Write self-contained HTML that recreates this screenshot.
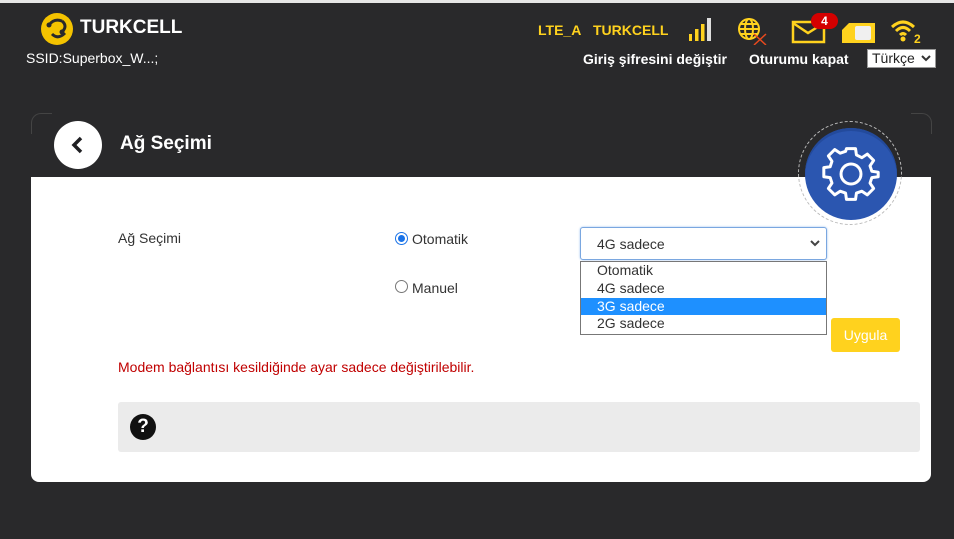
<!DOCTYPE html>
<html><head><meta charset="utf-8"><style>
body{margin:0;width:954px;height:539px;background:#29292b;font-family:"Liberation Sans",sans-serif;position:relative;overflow:hidden}
.a{position:absolute}
.y{color:#ffd21e;font-weight:bold;font-size:14px}
.w{color:#fff;font-weight:bold;font-size:14px}
.opt{position:absolute;left:16px;font-size:14px;color:#333}
</style></head><body>
<div class="a" style="left:0;top:0;width:954px;height:3px;background:#e6e6e6"></div>
<svg class="a" style="left:40px;top:12px" width="34" height="34" viewBox="0 0 34 34"><circle cx="17" cy="17" r="16" fill="#f4c300"/><path d="M9 13 Q14 6 22 9 M12 22 Q18 28 25 21 M22 9 Q28 14 22 20" stroke="#29292b" stroke-width="3" fill="none"/><circle cx="9" cy="13" r="2.5" fill="#29292b"/><circle cx="22" cy="20" r="2.5" fill="#29292b"/></svg>
<div class="a" style="left:80px;top:17px;color:#fff;font-weight:bold;font-size:19px">TURKCELL</div>
<div class="a" style="left:26px;top:50px;color:#fff;font-size:14px">SSID:Superbox_W...;</div>
<div class="a y" style="left:538px;top:22px">LTE_A</div>
<div class="a y" style="left:593px;top:22px">TURKCELL</div>
<svg class="a" style="left:688px;top:17px" width="26" height="26"><rect x="1" y="17" width="3" height="7" fill="#ffd21e"/><rect x="7" y="12" width="3.5" height="12" fill="#ffd21e"/><rect x="13" y="7" width="3.5" height="17" fill="#ffd21e"/><rect x="19" y="1" width="4" height="23" fill="#ddd"/></svg>
<svg class="a" style="left:737px;top:17px" width="32" height="28"><circle cx="12" cy="12" r="10" fill="none" stroke="#ffd21e" stroke-width="2"/><ellipse cx="12" cy="12" rx="4" ry="10" fill="none" stroke="#ffd21e" stroke-width="2"/><path d="M2 12H22M4 7H20M4 17H20" stroke="#ffd21e" stroke-width="2"/><path d="M17 17L29 28M29 17L17 28" stroke="#e84a1e" stroke-width="1.5"/></svg>
<svg class="a" style="left:791px;top:20px" width="36" height="24"><rect x="2" y="2" width="31" height="20" fill="none" stroke="#ffd21e" stroke-width="2.5"/><path d="M2 3L17 13L33 3" fill="none" stroke="#ffd21e" stroke-width="2.5"/></svg>
<div class="a" style="left:811px;top:13px;width:27px;height:16px;background:#d40000;border-radius:8px;color:#fff;font-weight:bold;font-size:12px;text-align:center;line-height:16px">4</div>
<svg class="a" style="left:841px;top:22px" width="36" height="22"><path d="M8 1H34V21H1V8Z" fill="#ffd21e"/><rect x="14" y="4" width="16" height="14" rx="2" fill="#f0f0f0"/></svg>
<svg class="a" style="left:890px;top:18px" width="34" height="26"><path d="M2 9Q13 -1 24 9M6 13Q13 6 20 13M10 17Q13 14 16 17" fill="none" stroke="#ffd21e" stroke-width="3"/><circle cx="13" cy="21" r="2.5" fill="#ffd21e"/><text x="24" y="25" fill="#ffd21e" font-size="12" font-weight="bold" font-family="Liberation Sans">2</text></svg>
<div class="a w" style="left:583px;top:51px">Giriş şifresini değiştir</div>
<div class="a w" style="left:749px;top:51px">Oturumu kapat</div>
<div class="a" style="left:867px;top:49px;width:69px;height:19px;background:#fff;border:1px solid #999;box-sizing:border-box;font-size:14px;color:#222;line-height:17px;padding-left:4px">Türkçe<svg style="position:absolute;right:4px;top:5px" width="10" height="8"><path d="M1 1L5 5L9 1" fill="none" stroke="#333" stroke-width="2"/></svg></div>
<div class="a" style="left:31px;top:113px;width:20px;height:20px;border-radius:10px 0 0 0;border-top:1px solid #444;border-left:1px solid #444"></div>
<div class="a" style="left:911px;top:113px;width:20px;height:20px;border-radius:0 10px 0 0;border-top:1px solid #444;border-right:1px solid #444"></div>
<div class="a" style="left:31px;top:177px;width:900px;height:305px;background:#fff;border-radius:0 0 8px 8px"></div>
<div class="a" style="left:54px;top:121px;width:48px;height:48px;border-radius:50%;background:#fff"></div>
<svg class="a" style="left:70px;top:135px" width="16" height="20"><path d="M11 3L4 10L11 17" fill="none" stroke="#1f1f22" stroke-width="3.5"/></svg>
<div class="a" style="left:120px;top:133px;color:#fff;font-weight:bold;font-size:19px">Ağ Seçimi</div>
<div class="a" style="left:798px;top:121px;width:104px;height:104px;border-radius:50%;border:1.5px dashed #bbb;box-sizing:border-box"></div>
<div class="a" style="left:805px;top:128px;width:92px;height:92px;border-radius:50%;background:#2b56b0;box-shadow:inset 0 3px 0 #234a9c"></div>
<svg class="a" style="left:822px;top:145px" width="58" height="58" viewBox="0 0 64 64"><g fill="none" stroke="#fff" stroke-width="3.3" stroke-linejoin="round"><path d="M27 6H37L38 13L44 16L50 12L57 19L53 25L55 31L62 32V37L55 38L53 44L57 50L50 57L44 53L38 55L37 62H27L26 55L20 53L14 57L7 50L11 44L9 38L2 37V27L9 26L11 20L7 14L14 7L20 11L26 9Z" transform="translate(0,-2)"/><circle cx="32" cy="32" r="11"/></g></svg>
<div class="a" style="left:118px;top:230px;font-size:14px;color:#333">Ağ Seçimi</div>
<div class="a" style="left:395px;top:232px;width:11px;height:11px;border-radius:50%;border:1px solid #1a73e8;background:#fff"><div style="margin:2px;width:7px;height:7px;border-radius:50%;background:#1a73e8"></div></div>
<div class="a" style="left:412px;top:231px;font-size:14px;color:#333">Otomatik</div>
<div class="a" style="left:395px;top:280px;width:11px;height:11px;border-radius:50%;border:1px solid #777;background:#fff"></div>
<div class="a" style="left:412px;top:280px;font-size:14px;color:#333">Manuel</div>
<div class="a" style="left:580px;top:227px;width:247px;height:33px;border:1px solid #7aa7e0;border-radius:3px;box-sizing:border-box;background:#fff;box-shadow:0 0 2px #9cc0f0"><span class="opt" style="top:8px">4G sadece</span><svg style="position:absolute;right:6px;top:12px" width="10" height="8"><path d="M1 1L5 5L9 1" fill="none" stroke="#444" stroke-width="2"/></svg></div>
<div class="a" style="left:580px;top:261px;width:247px;height:74px;border:1px solid #777;box-sizing:border-box;background:#fff">
<span class="opt" style="top:0">Otomatik</span><span class="opt" style="top:18px">4G sadece</span>
<div style="position:absolute;left:0;top:36px;width:245px;height:17px;background:#1e90ff"></div><span class="opt" style="top:36px;color:#fff">3G sadece</span>
<span class="opt" style="top:53px">2G sadece</span></div>
<div class="a" style="left:831px;top:318px;width:69px;height:34px;background:#ffd21e;border-radius:3px;color:#fff;font-size:14px;text-align:center;line-height:34px">Uygula</div>
<div class="a" style="left:118px;top:359px;font-size:14px;color:#c00000">Modem bağlantısı kesildiğinde ayar sadece değiştirilebilir.</div>
<div class="a" style="left:118px;top:402px;width:802px;height:50px;background:#ebebeb;border-radius:3px"></div>
<div class="a" style="left:130px;top:414px;width:26px;height:26px;border-radius:50%;background:#111;color:#fff;font-weight:bold;font-size:19px;text-align:center;line-height:26px">?</div>
</body></html>
